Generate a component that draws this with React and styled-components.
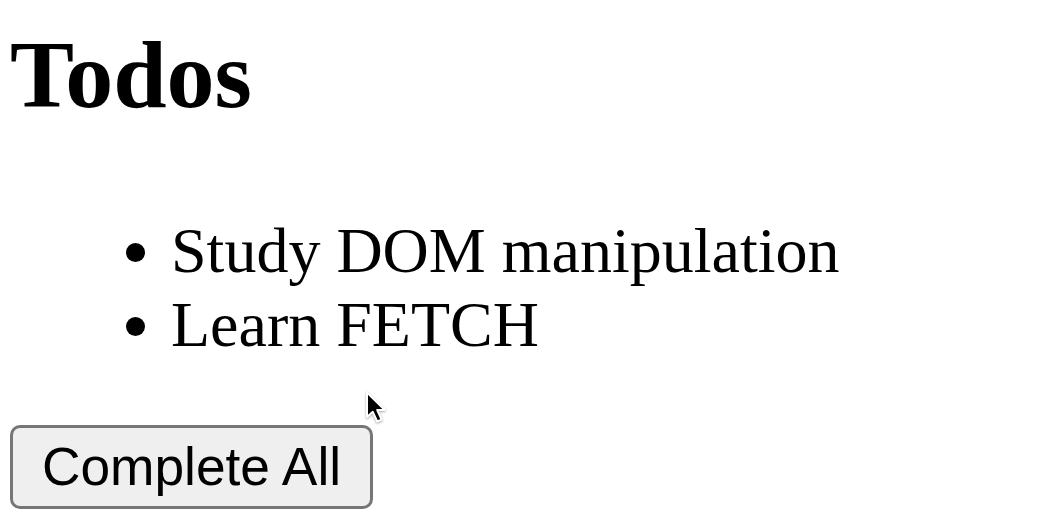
import React from "react";
import styled, { createGlobalStyle } from "styled-components";

const Global = createGlobalStyle`
  html, body { margin: 0; padding: 0; background: #fff; }
  body { font-family: "Liberation Serif", "Times New Roman", serif; color: #000; }
`;

const Page = styled.div`
  position: relative;
  padding: 0 0 0 10px;
  overflow: hidden;
  height: 522px;
  box-sizing: border-box;
`;

const Title = styled.h2`
  margin: 20px 0 0;
  font-size: 96px;
  font-weight: 700;
  line-height: 110px;
`;

const List = styled.ul`
  margin: 84px 0 64px;
  padding-left: 161px;
  list-style: disc;
`;

const Item = styled.li`
  font-size: 64px;
  line-height: 73.6px;
`;

const Button = styled.button`
  display: block;
  box-sizing: border-box;
  width: 363px;
  height: 84px;
  margin: 0;
  padding: 0 0 2px;
  background: #efefef;
  border: 3px solid #767676;
  border-radius: 10px;
  font-family: "Liberation Sans", Arial, sans-serif;
  font-size: 53.3px;
  color: #000;
  text-align: center;
`;

const Cursor = styled.svg`
  position: absolute;
  left: 364px;
  top: 390px;
  pointer-events: none;
  filter: drop-shadow(0 1px 1px rgba(0, 0, 0, 0.35));
`;

const todos = ["Study DOM manipulation", "Learn FETCH"];

export default function App() {
  return (
    <Page>
      <Global />
      <Title>Todos</Title>
      <List>
        {todos.map((t) => (
          <Item key={t}>{t}</Item>
        ))}
      </List>
      <Button>Complete All</Button>
      <Cursor width="26" height="40" viewBox="0 0 26 40">
        <path
          d="M3 2.5 L3 27 L8.8 21.8 L13.2 31.5 L17.6 29.6 L13.2 20 L20.8 20 Z"
          fill="#000"
          stroke="#fff"
          strokeWidth="2"
          strokeLinejoin="round"
        />
      </Cursor>
    </Page>
  );
}
